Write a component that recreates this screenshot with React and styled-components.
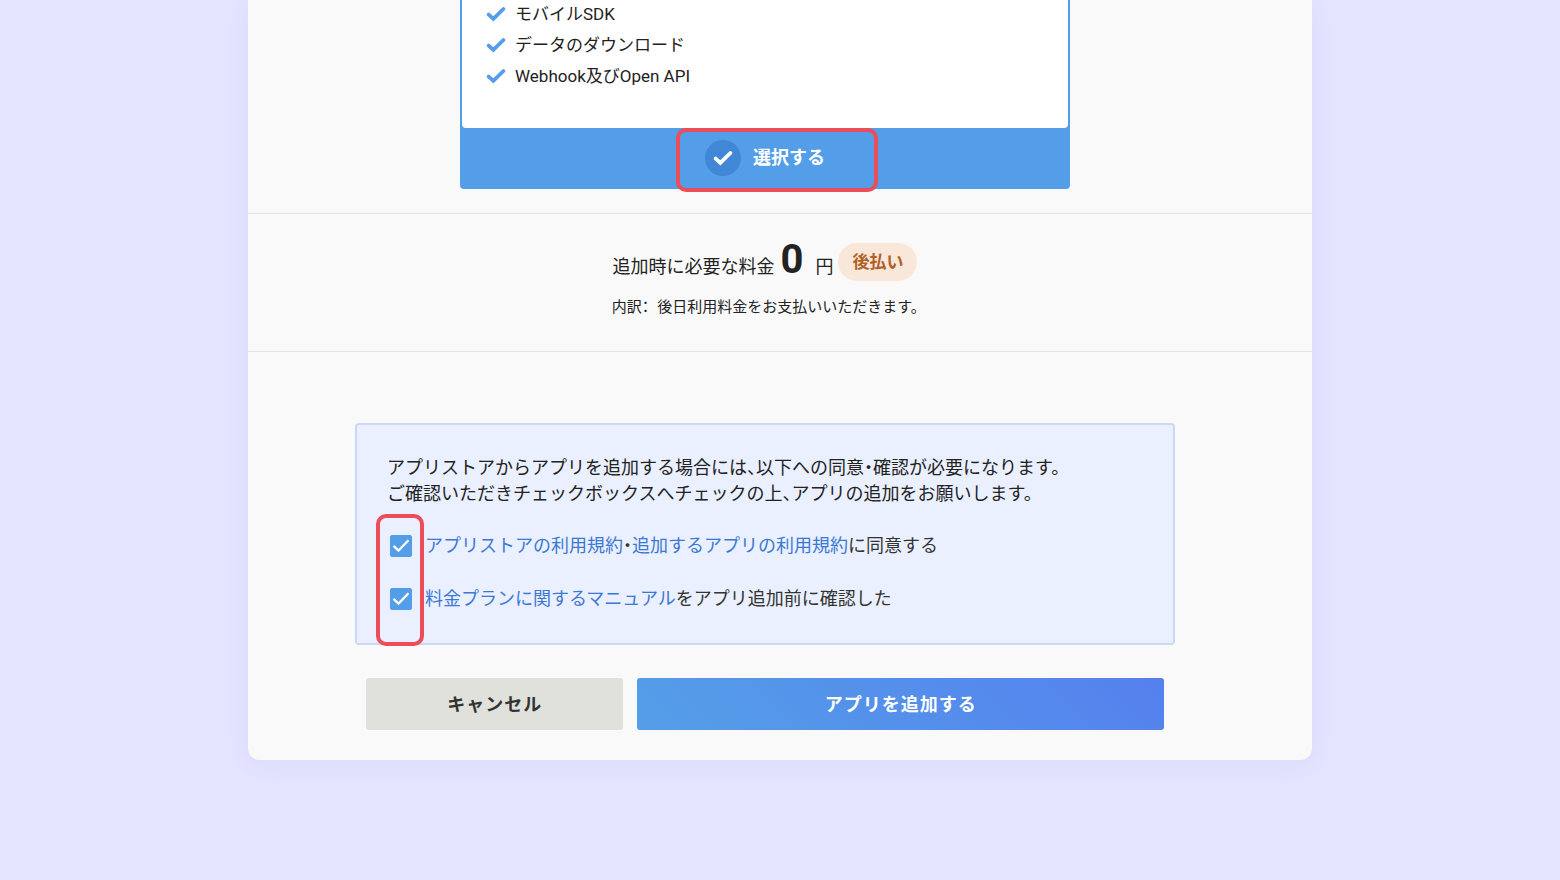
import {useState} from 'react';
import styled, {createGlobalStyle} from 'styled-components';

const GlobalStyle = createGlobalStyle`
    * {
      box-sizing: border-box;
    }
    body {
      margin: 0;
      background-color: #e4e4ff;
      color: #222;
      font-family: Roboto, "Noto Sans CJK JP", sans-serif;
      font-size: 18px;
      font-feature-settings: "halt";
    }
    button {
      border: 0;
      padding: 0;
      font: inherit;
      cursor: pointer;
    }
    p, ul {
      margin: 0;
      padding: 0;
    }
`;

const Page = styled.div`
    min-height: 100vh;
    padding: 0 24px 120px;
`;

const Modal = styled.main`
    max-width: 1064px;
    margin: 0 auto;
    background-color: #f9f9f9;
    border-radius: 0 0 12px 12px;
    box-shadow: 0 4px 24px rgba(90, 80, 220, 0.06);
`;

const Section = styled.section`
    display: flex;
    flex-direction: column;
    align-items: center;
    padding: ${props => props.$pad};
    & + & {
      border-top: 1px solid #e4e4e4;
    }
`;

const Plan = styled.div`
    width: 100%;
    max-width: 610px;
    padding: 0 2px;
    background-color: #549de8;
    border-radius: 0 0 4px 4px;
`;

const Features = styled.ul`
    display: flex;
    flex-direction: column;
    gap: 3px;
    padding: 0 24px 38px;
    background-color: #fff;
    border-radius: 0 0 4px 4px;
    list-style: none;
`;

const Feature = styled.li`
    display: flex;
    align-items: center;
    gap: 9px;
    font-size: 17px;
    line-height: 28px;
    color: #222;
`;

const SelectButton = styled.button`
    display: flex;
    justify-content: center;
    width: 100%;
    padding: 12px 0 13px;
    background: none;
    color: #fff;
    font-weight: bold;
`;

const SelectLabel = styled.span`
    position: relative;
    display: flex;
    align-items: center;
    gap: 12px;
    line-height: 36px;
`;

const Circle = styled.span`
    display: flex;
    align-items: center;
    justify-content: center;
    width: 36px;
    height: 36px;
    border-radius: 50%;
    background-color: #4088d6;
`;

const Highlight = styled.span`
    position: absolute;
    border: 4px solid #ec4d59;
    border-radius: 10px;
    pointer-events: none;
`;

const SelectHighlight = styled(Highlight)`
    inset: -12px -53px -16px -29px;
`;

const CheckHighlight = styled(Highlight)`
    inset: -19px auto -34px -11px;
    width: 48px;
`;

const Price = styled.div`
    display: flex;
    align-items: center;
    gap: 5px;
`;

const Amount = styled.p`
    display: flex;
    align-items: baseline;
    gap: 6px;
    padding-bottom: 4px;
    line-height: 26px;
`;

const Total = styled.strong`
    margin-right: 6px;
    font-size: 40px;
    line-height: 40px;
`;

const Badge = styled.span`
    padding: 0 14px;
    border-radius: 19px;
    background-color: #f9e8da;
    color: #b06028;
    font-size: 17px;
    font-weight: bold;
    line-height: 38px;
`;

const Breakdown = styled.p`
    display: flex;
    gap: 8px;
    margin-top: 10px;
    font-size: 15px;
    line-height: 26px;
`;

const Agreement = styled.div`
    width: 100%;
    max-width: 820px;
    padding: 30px 30px 31px;
    border: 2px solid #ccd7f5;
    border-radius: 4px;
    background-color: #eaf0ff;
    line-height: 26px;
`;

const Checks = styled.div`
    position: relative;
    display: flex;
    flex-direction: column;
    gap: 27px;
    margin-top: 26px;
`;

const CheckLabel = styled.label`
    display: flex;
    align-items: center;
    gap: 13px;
    padding-left: 3px;
    color: #333;
`;

const Box = styled.span`
    display: grid;
    place-items: center;
    & > * {
      grid-area: 1 / 1;
    }
    & > svg {
      pointer-events: none;
    }
`;

const Checkbox = styled.input`
    appearance: none;
    width: 22px;
    height: 22px;
    margin: 0;
    border: 1px solid #549de8;
    border-radius: 2px;
    background-color: #fff;
    &:checked {
      background-color: #549de8;
    }
`;

const Link = styled.a`
    color: #3c78d2;
    text-decoration: none;
`;

const Actions = styled.div`
    display: grid;
    grid-template-columns: 257fr 526fr;
    gap: 14px;
    width: 100%;
    max-width: 798px;
    margin-top: 33px;
`;

const ActionButton = styled.button`
    padding-top: 2px;
    border-radius: 3px;
    background: ${props => props.$primary ? 'linear-gradient(45deg, #549fe8, #5580ee)' : '#e0e1db'};
    color: ${props => props.$primary ? '#fff' : '#333'};
    font-weight: bold;
    letter-spacing: 1px;
    line-height: 50px;
`;

const features = ['モバイルSDK', 'データのダウンロード', 'Webhook及びOpen API'];

const Tick = ({color}) => (
    <svg width="20" height="16" viewBox="0 0 20 16" fill="none" aria-hidden="true">
      <path d="M2.7 8.6L7.4 12.9L17.4 3" stroke={color} strokeWidth="3.8" strokeLinecap="round"/>
    </svg>
);

const Check = ({children}) => {
  const [checked, setChecked] = useState(true);
  return (
      <CheckLabel>
        <Box>
          <Checkbox type="checkbox" checked={checked} onChange={e => setChecked(e.target.checked)}/>
          {checked && (
              <svg width="22" height="22" viewBox="0 0 22 22" fill="none" aria-hidden="true">
                <path d="M3.5 10.8L8.5 15.6L18.5 5.2" stroke="#fff" strokeWidth="2.3"/>
              </svg>
          )}
        </Box>
        <span>{children}</span>
      </CheckLabel>
  );
};

const App = () => (
    <Page>
      <GlobalStyle/>
      <Modal>
        <Section $pad="0 30px 24px 0">
          <Plan>
            <Features>
              {features.map(name => (
                  <Feature key={name}><Tick color="#549de8"/>{name}</Feature>
              ))}
            </Features>
            <SelectButton type="button">
              <SelectLabel>
                <Circle><Tick color="#fff"/></Circle>
                選択する
                <SelectHighlight/>
              </SelectLabel>
            </SelectButton>
          </Plan>
        </Section>
        <Section $pad="26px 30px 31px 0">
          <Price>
            <Amount>追加時に必要な料金<Total>0</Total>円</Amount>
            <Badge>後払い</Badge>
          </Price>
          <Breakdown>
            <span>内訳：</span>
            <span>後日利用料金をお支払いいただきます。</span>
          </Breakdown>
        </Section>
        <Section $pad="71px 30px 30px 0">
          <Agreement>
            <p>
              アプリストアからアプリを追加する場合には、以下への同意・確認が必要になります。<br/>
              ご確認いただきチェックボックスへチェックの上、アプリの追加をお願いします。
            </p>
            <Checks>
              <Check>
                <Link href="#store-terms">アプリストアの利用規約</Link>・<Link href="#app-terms">追加するアプリの利用規約</Link>に同意する
              </Check>
              <Check>
                <Link href="#plan-manual">料金プランに関するマニュアル</Link>をアプリ追加前に確認した
              </Check>
              <CheckHighlight/>
            </Checks>
          </Agreement>
          <Actions>
            <ActionButton type="button">キャンセル</ActionButton>
            <ActionButton type="button" $primary>アプリを追加する</ActionButton>
          </Actions>
        </Section>
      </Modal>
    </Page>
);

export default App;
